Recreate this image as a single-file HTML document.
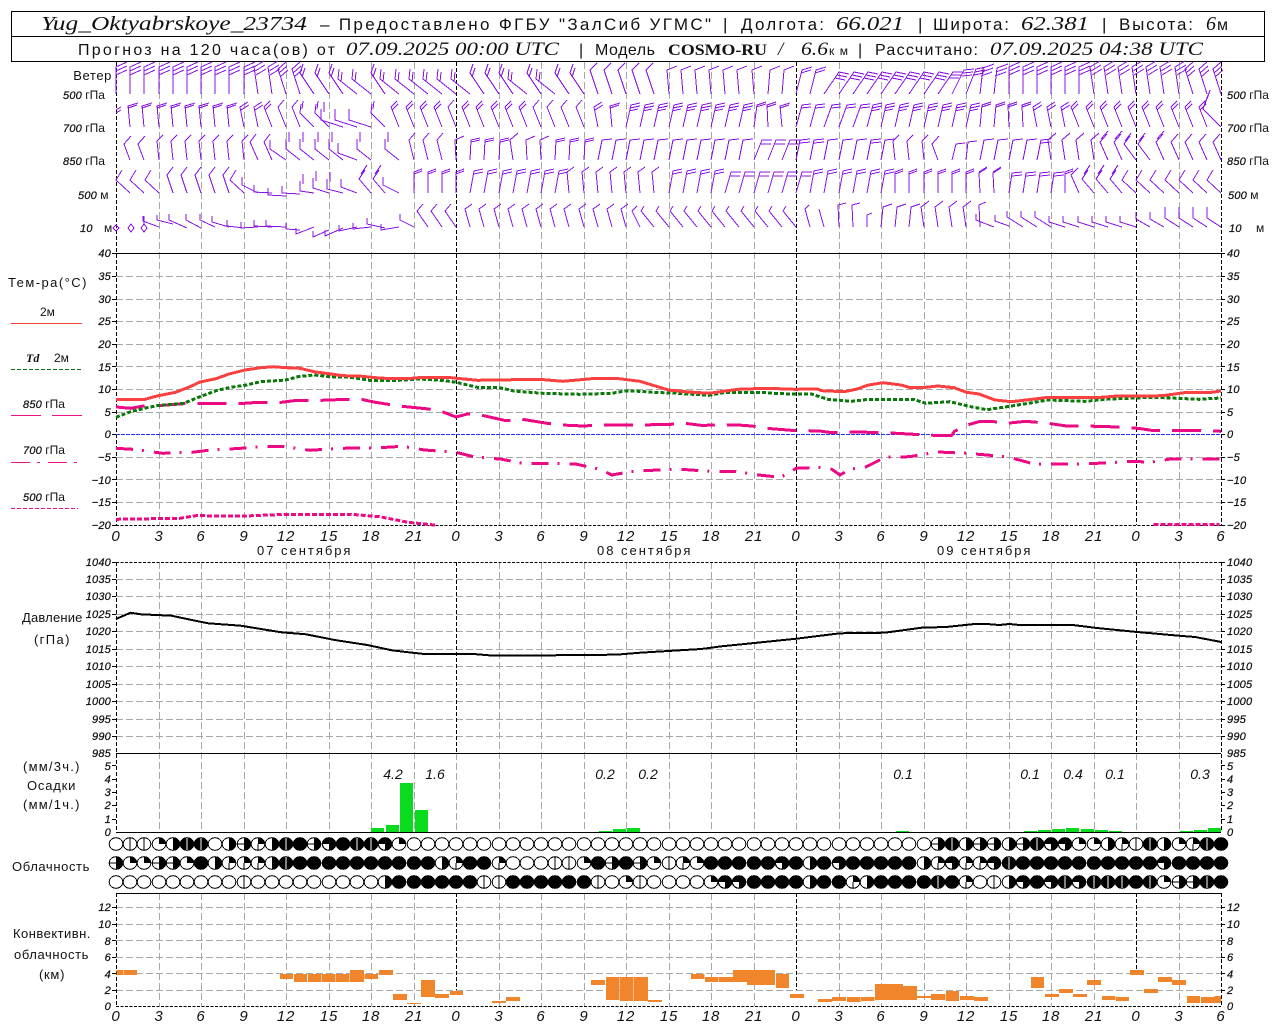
<!DOCTYPE html>
<html lang="ru"><head><meta charset="utf-8"><title>Yug_Oktyabrskoye_23734</title>
<style>
html,body{margin:0;padding:0;background:#fff}
svg{display:block}
text{font-family:"Liberation Sans","DejaVu Sans",sans-serif;fill:#111}
.i{font-style:italic;font-family:"Liberation Serif","Liberation Sans",serif}
.n{font-style:italic;font-size:11px;letter-spacing:.2px;stroke:#111;stroke-width:.25px}
.l{text-anchor:end}
.h{font-style:italic;font-size:15px;letter-spacing:.8px;text-anchor:middle}
.s{font-size:12px}
.m{font-size:13px;letter-spacing:.6px}
.t{font-size:17px}
.u{font-size:16px}
.ti{font-size:20px}
.ui{font-size:19px}
.bar{fill:#f0852c;shape-rendering:crispEdges}
</style></head><body>
<svg xmlns="http://www.w3.org/2000/svg" width="1280" height="1024" viewBox="0 0 1280 1024">
<defs>
<g id="o"><ellipse rx="6.8" ry="6.3" fill="#fff" stroke="#000"/></g>
<g id="v"><ellipse rx="6.8" ry="6.3" fill="#fff" stroke="#000"/><path d="M0-6V6" stroke="#000" fill="none"/></g>
<g id="q"><ellipse rx="6.8" ry="6.3" fill="#fff" stroke="#000"/><path d="M0 0V-6.3A6.8 6.3 0 0 1 6.8 0Z" fill="#000"/></g>
<g id="h"><ellipse rx="6.8" ry="6.3" fill="#fff" stroke="#000"/><path d="M0-6.3A6.8 6.3 0 0 1 0 6.3Z" fill="#000"/></g>
<g id="r"><ellipse rx="6.8" ry="6.3" fill="#fff" stroke="#000"/><path d="M0 0V-6.3A6.8 6.3 0 0 1 6.8 0Z" fill="#000"/><path d="M0 0V6" stroke="#000"/></g>
<g id="f"><ellipse rx="6.8" ry="6.3" fill="#fff" stroke="#000"/><path d="M0-6.3A6.8 6.3 0 0 1 0 6.3Z" fill="#000"/><path d="M-6.5 0H0" stroke="#000"/></g>
<g id="s"><ellipse rx="6.8" ry="6.3" fill="#000" stroke="#000"/><path d="M0 0V5.6A6 5.6 0 0 1-6 0Z" fill="#fff"/></g>
<g id="t"><ellipse rx="6.8" ry="6.3" fill="#000" stroke="#000"/><path d="M0-6V6" stroke="#fff"/></g>
<g id="d"><ellipse rx="6.8" ry="6.3" fill="#000" stroke="#000"/></g>
</defs>
<rect width="1280" height="1024" fill="#fff"/>

<!-- header boxes -->
<rect x="11.5" y="11.5" width="1253" height="25" fill="none" stroke="#000" shape-rendering="crispEdges"/>
<rect x="11.5" y="36.5" width="1253" height="25" fill="none" stroke="#000" shape-rendering="crispEdges"/>
<text class="i ti" x="41" y="30" textLength="266" lengthAdjust="spacingAndGlyphs">Yug_Oktyabrskoye_23734</text>
<text class="t" x="320" y="30" textLength="391" lengthAdjust="spacing">– Предоставлено ФГБУ "ЗалСиб УГМС"</text>
<text class="t" x="723" y="30">|</text>
<text class="t" x="741" y="30" textLength="83" lengthAdjust="spacing">Долгота:</text>
<text class="i ti" x="836" y="30" textLength="68" lengthAdjust="spacingAndGlyphs">66.021</text>
<text class="t" x="918" y="30">|</text>
<text class="t" x="933" y="30" textLength="76" lengthAdjust="spacing">Широта:</text>
<text class="i ti" x="1021" y="30" textLength="68" lengthAdjust="spacingAndGlyphs">62.381</text>
<text class="t" x="1102" y="30">|</text>
<text class="t" x="1119" y="30" textLength="74" lengthAdjust="spacing">Высота:</text>
<text class="i ti" x="1206" y="30">6</text><text class="u" x="1217" y="30">м</text>

<text class="u" x="78" y="55" textLength="257" lengthAdjust="spacing">Прогноз на 120 часа(ов) от</text>
<text class="i ui" x="346" y="55" textLength="213" lengthAdjust="spacingAndGlyphs">07.09.2025 00:00 UTC</text>
<text class="u" x="579" y="55">|</text>
<text class="u" x="595" y="55" textLength="60" lengthAdjust="spacing">Модель</text>
<text class="u" x="668" y="55" textLength="99" lengthAdjust="spacingAndGlyphs" style="font-family:'Liberation Serif',serif;font-weight:bold">COSMO-RU</text>
<text class="i ui" x="778" y="55">/</text>
<text class="i ui" x="801" y="55" textLength="27" lengthAdjust="spacingAndGlyphs">6.6</text>
<text class="s" x="829" y="55" textLength="19" lengthAdjust="spacing">км</text>
<text class="u" x="858" y="55">|</text>
<text class="u" x="875" y="55" textLength="103" lengthAdjust="spacing">Рассчитано:</text>
<text class="i ui" x="990" y="55" textLength="213" lengthAdjust="spacingAndGlyphs">07.09.2025 04:38 UTC</text>

<!-- gray grid -->
<g fill="none" stroke="#a8a8a8" stroke-dasharray="7 3" shape-rendering="crispEdges">
<path d="M116 276.5H1221M116 299.5H1221M116 321.5H1221M116 344.5H1221M116 366.5H1221M116 389.5H1221M116 412.5H1221M116 457.5H1221M116 479.5H1221M116 502.5H1221"/>
<path d="M116 579.5H1221M116 596.5H1221M116 614.5H1221M116 631.5H1221M116 649.5H1221M116 666.5H1221M116 684.5H1221M116 701.5H1221M116 719.5H1221M116 736.5H1221"/>
<path d="M116 907.5H1221M116 924.5H1221M116 940.5H1221M116 957.5H1221M116 973.5H1221M116 990.5H1221"/>
<path d="M159.5 62V525M201.5 62V525M244.5 62V525M286.5 62V525M329.5 62V525M371.5 62V525M414.5 62V525M499.5 62V525M541.5 62V525M584.5 62V525M626.5 62V525M669.5 62V525M711.5 62V525M754.5 62V525M839.5 62V525M881.5 62V525M924.5 62V525M966.5 62V525M1009.5 62V525M1051.5 62V525M1094.5 62V525M1179.5 62V525"/>
<path d="M159.5 562V832M201.5 562V832M244.5 562V832M286.5 562V832M329.5 562V832M371.5 562V832M414.5 562V832M499.5 562V832M541.5 562V832M584.5 562V832M626.5 562V832M669.5 562V832M711.5 562V832M754.5 562V832M839.5 562V832M881.5 562V832M924.5 562V832M966.5 562V832M1009.5 562V832M1051.5 562V832M1094.5 562V832M1179.5 562V832"/>
<path d="M159.5 893V1006M201.5 893V1006M244.5 893V1006M286.5 893V1006M329.5 893V1006M371.5 893V1006M414.5 893V1006M499.5 893V1006M541.5 893V1006M584.5 893V1006M626.5 893V1006M669.5 893V1006M711.5 893V1006M754.5 893V1006M839.5 893V1006M881.5 893V1006M924.5 893V1006M966.5 893V1006M1009.5 893V1006M1051.5 893V1006M1094.5 893V1006M1179.5 893V1006"/>
<path d="M456.5 753V832M796.5 753V832M1136.5 753V832"/>
</g>
<!-- black axes -->
<g fill="none" stroke="#000" shape-rendering="crispEdges">
<path stroke-dasharray="4 2" d="M116.5 62V525M1221.5 62V525M456.5 62V525M796.5 62V525M1136.5 62V525M116.5 562V832M1221.5 562V832M456.5 562V753M796.5 562V753M1136.5 562V753M116.5 893V1006M1221.5 893V1006M456.5 893V990M796.5 893V990M1136.5 893V975"/>
<path d="M116 253.5H1221M116 753.5H1221M116 832.5H1221M116 893.5H1221"/>
<path stroke-dasharray="3 1.5" d="M116 525.5H1221M116 562.5H1221M116 1006.5H1221"/>
<path d="M112 253.5h4M112 276.5h4M112 299.5h4M112 321.5h4M112 344.5h4M112 366.5h4M112 389.5h4M112 412.5h4M112 434.5h4M112 457.5h4M112 479.5h4M112 502.5h4M112 525.5h4M1221 253.5h4M1221 276.5h4M1221 299.5h4M1221 321.5h4M1221 344.5h4M1221 366.5h4M1221 389.5h4M1221 412.5h4M1221 434.5h4M1221 457.5h4M1221 479.5h4M1221 502.5h4M1221 525.5h4"/>
<path d="M112 562.5h4M112 579.5h4M112 596.5h4M112 614.5h4M112 631.5h4M112 649.5h4M112 666.5h4M112 684.5h4M112 701.5h4M112 719.5h4M112 736.5h4M1221 562.5h4M1221 579.5h4M1221 596.5h4M1221 614.5h4M1221 631.5h4M1221 649.5h4M1221 666.5h4M1221 684.5h4M1221 701.5h4M1221 719.5h4M1221 736.5h4"/>
<path d="M112 765.5h4M112 779.5h4M112 792.5h4M112 805.5h4M112 819.5h4M1221 765.5h4M1221 779.5h4M1221 792.5h4M1221 805.5h4M1221 819.5h4"/>
<path d="M112 907.5h4M112 924.5h4M112 940.5h4M112 957.5h4M112 973.5h4M112 990.5h4M1221 907.5h4M1221 924.5h4M1221 940.5h4M1221 957.5h4M1221 973.5h4M1221 990.5h4"/>
</g>

<!-- wind barbs -->
<g fill="none" stroke="#8a14e6" shape-rendering="crispEdges">
<path d="M116 94v-27l11-5m-11 9 11-5m-11 9 11-5M130 94v-27l11-5m-11 9 11-5m-11 9 11-5M144 94v-27l11-5m-11 9 11-5m-11 9 11-5M159 94v-27l11-5m-11 9 11-5m-11 9 11-5M173 94v-27l11-5m-11 9 11-5m-11 9 11-5M187 94v-27l11-5m-11 9 11-5m-11 9 11-5M201 94v-27l11-5m-11 9 11-5m-11 9 11-5M215 94v-27l11-5m-11 9 11-5m-11 9 11-5M229 94v-27l11-5m-11 9 11-5m-11 9 11-5M244 94v-27l11-5m-11 9 11-5m-11 9 11-5M258 94l-4-27 10-6m-9 10 10-6m-9 10 10-6M272 94l-4-27 10-6m-9 10 10-6m-9 10 10-6M286 94l-8-25 8-7m-7 11 8-7m-7 11 8-7M300 94l-8-25 8-7m-7 11 8-7m-7 11 8-7M314 94l-14-21 3-9m-1 13 3-9M329 94l-14-21 3-9m-1 13 3-9M343 94l-14-21 3-9m-1 13 3-9M357 94l-19-15 1-10m2 13 1-10M371 94l-19-15 1-10m2 13 1-10M385 94l-14-21 3-9m-1 13 3-9M399 94l-19-15 1-10m2 13 1-10M414 94l-19-15 1-10m2 13 1-10M428 94l-19-15 1-10m2 13 1-10M442 94l-19-15 1-10m2 13 1-10M456 94l-19-15 1-10m2 13 1-10M470 94l-19-15 1-10m2 13 1-10M484 94l-14-21 3-9m-1 13 3-9M499 94l-14-21 3-9m-1 13 3-9M513 94l-14-21 3-9m-1 13 3-9M527 94l-19-15 1-10m2 13 1-10M541 94l-14-21 3-9m-1 13 3-9M555 94l-19-15 1-10m2 13 1-10M569 94l-14-21 3-9m-1 13 3-9M584 94l-14-21 3-9m-1 13 3-9M598 94l-8-24 7-7M612 94l-8-24 7-7M626 94l-8-24 7-7M640 94l-8-24 7-7M654 94l-8-24 7-7M669 94l-2-24 10-4M683 94l-2-24 10-4M697 94l-2-24 10-4M711 94l-2-24 10-4M725 94l-2-24 10-4M739 94l-2-24 10-4M754 94l-2-24 10-4M768 94l2-24 10-4M782 94l2-24 10-4M796 94l6-24 10-3m-11 6 10-3M810 94l6-24 10-3m-11 6 10-3M824 94l15-22 10 2m-12 1 10 2m-12 1 10 2M839 94l15-22 10 2m-12 1 10 2m-12 1 10 2M853 94l15-22 10 2m-12 1 10 2m-12 1 10 2M867 94l15-22 10 2m-12 1 10 2m-12 1 10 2M881 94l15-22 10 2m-12 1 10 2m-12 1 10 2M895 94l15-22 10 2m-12 1 10 2m-12 1 10 2M909 94l15-22 10 2m-12 1 10 2m-12 1 10 2M924 94l15-22 10 2m-12 1 10 2m-12 1 10 2M938 94l15-22 10 0m-12 3 10 0m-12 3 10 0M952 94l12-24 10-1m-11 4 10-1m-11 4 10-1M966 94l10-25 10-2m-11 5 10-2m-11 5 10-2M980 94l3-26 11-4m-12 8 11-4m-12 8 11-4M994 94l3-26 11-4m-12 8 11-4m-12 8 11-4M1009 94v-27l11-5m-11 9 11-5m-11 9 11-5M1023 94v-27l11-5m-11 9 11-5m-11 9 11-5M1037 94v-27l11-5m-11 9 11-5m-11 9 11-5M1051 94v-27l11-5m-11 9 11-5m-11 9 11-5M1065 94v-27l11-5m-11 9 11-5m-11 9 11-5M1079 94v-27l11-5m-11 9 11-5m-11 9 11-5M1094 94l-4-27 10-6m-9 10 10-6m-9 10 10-6M1108 94l-4-27 10-6m-9 10 10-6m-9 10 10-6M1122 94l-4-27 10-6m-9 10 10-6m-9 10 10-6M1136 94l-4-27 10-6m-9 10 10-6m-9 10 10-6M1150 94l-4-27 10-6m-9 10 10-6m-9 10 10-6M1164 94l-4-27 10-6m-9 10 10-6m-9 10 10-6M1179 94l-4-27 10-6m-9 10 10-6m-9 10 10-6M1193 94l-8-25 8-7m-7 11 8-7m-7 11 8-7M1207 94l-8-25 8-7m-7 11 8-7m-7 11 8-7M1221 94l-8-25 8-7m-7 11 8-7m-7 11 8-7"/>
<path d="M116 110l5-3m-5 6 5-3M130 127l-2-21 10-3m-10 5 9-3M144 127l-2-21 10-3m-10 5 9-3M159 127l-2-21 10-3m-10 5 9-3M173 127l-2-21 10-3m-10 5 9-3M187 127l-2-21 10-3m-10 5 9-3M201 127l-2-21 10-3m-10 5 9-3M215 127l-2-21 10-3m-10 5 9-3M229 127l-2-21 10-3m-10 5 9-3M244 127l-4-20 8-5m-7 8 8-5M258 127l-4-20 8-5m-7 8 8-5M272 127l-8-20 6-6m-5 9 6-6M286 127l-8-20 6-7M300 127l-8-20 6-7M314 127l-14-14 1-9m1 5 1-8M329 127l-14-14 1-9m1 5 1-8M343 127l-22-7 0-11m3 3 0-10M357 127l-22-7 0-11M371 127l-22-7 0-11M385 127l-14-14 1-9m1 5 1-8M399 127l-8-20 6-6m-5 9 6-6M414 127l-8-20 6-6m-5 9 6-6M428 127l-8-20 6-6m-5 9 6-6M442 127l-8-20 6-6m-5 9 6-6M456 127l-8-20 6-7M470 127l-8-20 6-6m-5 9 6-6M484 127l-8-20 6-6m-5 9 6-6M499 127l-8-20 6-6m-5 9 6-6M513 127l-8-20 6-6m-5 9 6-6M527 127l-8-20 6-6m-5 9 6-6M541 127l-8-20 6-7M555 127l-8-20 6-7M569 127l-8-20 6-7M584 127l-8-20 6-7M598 127l-4-20 8-5m-7 8 8-5M612 127l-2-21 10-3m-10 5 9-3M626 127l5-22 9-2m-10 5 10-2m-11 5 9-2M640 127l5-22 9-2m-10 5 10-2m-11 5 9-2M654 127l5-22 9-2m-10 5 10-2m-11 5 9-2M669 127l5-22 9-2m-10 5 10-2m-11 5 9-2M683 127l5-22 9-2m-10 5 10-2m-11 5 9-2M697 127l5-22 9-2m-10 5 10-2m-11 5 9-2M711 127l5-22 9-2m-10 5 10-2m-11 5 9-2M725 127l5-22 9-2m-10 5 10-2m-11 5 9-2M739 127l5-22 9-2m-10 5 10-2m-11 5 9-2M754 127l3-22 9-3m-10 5 10-3M768 127l-1-22 9-3m-9 5 9-3M782 127l-2-21 10-3m-10 5 9-3M796 127l6-22 9-1m-10 4 10-1M810 127l6-22 9-1m-10 4 10-1M824 127l8-22 9-1m-10 4 10-1M839 127l8-22 9-1m-10 4 10-1M853 127l8-22 9-1m-10 4 10-1M867 127l6-22 9-2m-10 5 10-2m-11 5 9-2M881 127l5-22 9-2m-10 5 10-2m-11 5 9-2M895 127l5-22 9-2m-10 5 10-2m-11 5 9-2M909 127l5-22 9-2m-10 5 10-2m-11 5 9-2M924 127l5-22 9-2m-10 5 10-2m-11 5 9-2M938 127l5-22 9-2m-10 5 10-2m-11 5 9-2M952 127l5-22 9-2m-10 5 10-2m-11 5 9-2M966 127l5-22 9-2m-10 5 10-2m-11 5 9-2M980 127l2-22 9-3m-9 5 9-3M994 127l2-22 9-3m-9 5 9-3M1009 127l-1-22 9-3m-9 5 9-3M1023 127l-1-22 9-3m-9 5 9-3M1037 127l-4-20 8-5m-7 8 8-5M1051 127l-4-20 8-5m-7 8 8-5M1065 127l-4-20 8-5m-7 8 8-5M1079 127l-8-20 6-6m-5 9 6-6M1094 127l-8-20 6-6m-5 9 6-6M1108 127l-8-20 6-6m-5 9 6-6M1122 127l-8-20 6-6m-5 9 6-6M1136 127l-8-20 6-6m-5 9 6-6M1150 127l-8-20 6-6m-5 9 6-6M1164 127l-8-20 6-6m-5 9 6-6M1179 127l-8-20 6-6m-5 9 6-6M1193 127l-8-20 6-6m-5 9 6-6M1207 127l-8-20 6-6m-5 9 6-6M1221 127l-18-18 3-9m-1 4 3-9m-1 4 3-9"/>
<path d="M130 160l-6-16 7-8M144 160l-6-16 7-8M159 160l-2-19 6-6M173 160l-2-19 6-6M187 160l-2-19 6-6M201 160l-2-19 6-6M215 160l-2-19 6-6M229 160l-2-19 6-6M244 160l-2-19 6-6M258 160l-8-18 6-8M272 160l-8-18 6-8M286 160l-16-11 0-9M300 160l-14-11 0-10m3 3 0-10M314 160l-14-11 0-10m3 3 0-10M329 160l-14-11 0-10m3 3 0-10M343 160l-14-11 0-10m3 3 0-10M357 160l-19-7 0-10M371 160l-14-11 0-10m3 3 0-10M399 160l-14-11 0-10m3 3 0-10M414 160l-5-20 6-7M428 160l-5-20 6-7M442 160l-5-20 6-7M456 160l-1-20 9-4M470 160l1-20 9-2m-9 4 9-2M484 160l1-20 9-2m-9 4 9-2M499 160l1-20 9-2m-9 4 9-2M513 160l-3-20 7-6m-6 5 7-6M527 160l-1-20 9-4M541 160l-1-20 9-4M555 160l1-20 9-2m-9 4 9-2M569 160l1-20 9-2m-9 4 9-2M584 160l1-20 9-2m-9 4 9-2M598 160l4-20 10-1M612 160l4-20 10-1M626 160l4-20 10-1M640 160l4-20 10-1M654 160l4-20 10-1M669 160l4-20 10-1M683 160l4-20 10-1M697 160l4-20 10-1M711 160l4-20 10-1M725 160l4-20 10-1M739 160l4-20 10-1M754 160l8-20 10 0m-11 4 10 0M768 160l8-20 10 0m-11 4 10 0M782 160l8-20 10 0m-11 4 10 0M796 160l4-20 10-1m-10 4 10-1M810 160l4-20 10-1m-10 4 10-1M824 160l4-20 10-1M839 160l4-20 10-1M853 160l4-20 10-1M867 160l4-20 10-1m-10 4 10-1M881 160l4-20 10-1M895 160l-2-19 6-6M909 160l-2-19 6-6M924 160l-2-19 6-6M938 160l-6-16 7-8M952 160l4-16 9-1M966 160l2-18 9-1M980 160l4-20 10-1M994 160l4-20 10-1M1009 160l4-20 10-1M1023 160l4-20 10-1M1037 160l4-20 10-1m-10 4 10-1M1051 160l-3-20 7-6m-6 5 7-6M1065 160l-3-20 7-6m-6 5 7-6M1079 160l-3-20 7-6m-6 5 7-6M1094 160l-3-20 7-6m-6 5 7-6M1108 160l-8-18 7-8m-6 5 7-8M1122 160l-8-18 7-8m-6 5 7-8M1136 160l-12-16 6-8m-5 5 6-8M1150 160l-12-16 6-8m-5 5 6-8M1164 160l-8-18 7-8m-6 5 7-8M1179 160l-8-18 7-8M1193 160l-8-18 7-8M1207 160l-8-18 7-8M1221 160l-8-18 7-8"/>
<path d="M130 193l-14-13 6-10M144 193l-14-13 6-10M159 193l-14-13 6-10M173 193l-6-18 6-8M187 193l-6-18 6-8M201 193l-6-18 6-8M215 193l-6-18 6-8M229 193l-6-18 6-8M244 193l-14-13 6-10M258 193l-16-8 0-8M272 193l-18-1 0-7M286 196l-18-1 0-7M300 194l-18-1 0-7M314 193l-14-2 0-10m3 3 0-10M329 193l-16-5 0-10m3 3 0-10M343 193l-16-4 0-10m3 3 0-10M357 193l-16-6 0-8M371 193l-12-14 6-9m-4 4 6-9M385 193l-12-14 6-9m-4 4 6-9M399 193l-16-8 0-8M414 193v-21l8-3m-8 5 8-3M428 193v-21l8-3m-8 5 8-3M442 193v-21l8-3m-8 5 8-3M456 193v-21l8-3m-8 5 8-3M470 193l4-22 9-2m-9 5 9-2M484 193l4-22 9-2m-9 5 9-2M499 193l4-22 9-2m-9 5 9-2M513 193l4-22 9-2m-9 5 9-2M527 193l4-22 9-2m-9 5 9-2M541 193l4-22 9-2m-9 5 9-2M555 193l4-22 9-2m-9 5 9-2M569 193l-2-21 7-5M584 193l-2-21 7-5M598 193l-2-21 7-5M612 193l-2-21 7-5M626 193l-2-21 7-5M640 193l-2-21 7-5M654 193l-2-21 7-5M669 193l4-22 9-2m-9 5 9-2M683 193l4-22 9-2m-9 5 9-2M697 193l4-22 9-2m-9 5 9-2M711 193l4-22 9-2m-9 5 9-2M725 193l6-21 10 0m-11 4 10 0M739 193l6-21 10 0m-11 4 10 0M754 193l6-21 10 0m-11 4 10 0M768 193l6-21 10 0m-11 4 10 0M782 193l6-21 10 0m-11 4 10 0M796 193l6-21 10 0m-11 4 10 0M810 193l4-22 9-2m-9 5 9-2M824 193l4-22 9-2m-9 5 9-2M839 193l4-22 9-2m-9 5 9-2M853 193l4-22 9-2m-9 5 9-2M867 193l4-22 9-2m-9 5 9-2M881 193l4-22 9-2m-9 5 9-2M895 193v-21l8-3m-8 5 8-3M909 193v-21l8-3m-8 5 8-3M924 193v-21l8-3m-8 5 8-3M938 193v-21l8-3m-8 5 8-3M952 193v-21l8-3m-8 5 8-3M966 193v-21l8-3m-8 5 8-3M980 193l-1-20 8-5m-8 4 8-5M994 193l-1-20 8-5m-8 4 8-5M1009 193l3-20 10-1m-10 4 10-1M1023 193l3-20 10-1m-10 4 10-1M1037 193l3-20 10-1m-10 4 10-1M1051 193l3-20 10-1m-10 4 10-1M1065 193v-21l8-3m-8 5 8-3M1079 193l-8-18 7-7M1094 193l-12-14 6-9m-4 4 6-9M1108 193l-12-14 6-9m-4 4 6-9M1122 193l-12-14 6-9m-4 4 6-9M1136 193l-14-13 6-10M1150 193l-14-13 6-10M1164 193l-14-13 6-10M1179 193l-14-13 6-10M1193 193l-14-13 6-10M1207 193l-14-13 6-10M1221 193l-14-13 6-10"/>
<path d="M113 228l3-3 3 3-3 3zM128 228l3-4 3 4-3 4zM141 228l3-4 3 4-3 4zM144 224v-8M159 227l-16-6 0-5M173 224l-16-4 0-5M187 228l-18-8 0-6M201 228l-15-8 0-6M215 227l-15-7 0-6M229 227l-17-5 0-6M244 228l-17-2 0-6M258 227l-17 1 0-6M272 227l-18-1 0-6M286 227l-20-1 0-6M300 230l-14-1 0-6M314 227l-18 7 0-6M329 230l-16 7 0-6M343 228l-18 8 0-6M357 227l-18 4 0-6M371 227l-18 2 0-6M385 228l-18-4 0-6M399 227l-18 3 0-6M414 227l-14-7 0-6M428 227l-11-16 6-7M442 227l-11-16 6-7M456 227l-11-16 6-7M470 227l-5-18 7-5M484 227l-5-18 7-5M499 227l-5-18 7-5M513 227l-5-18 7-5M527 227l-5-18 7-5M541 227l-5-18 7-5M555 227l-5-18 7-5M569 227l-5-18 7-5M584 227l-5-18 7-5M598 227l-5-18 7-5M612 227l-5-18 7-5M626 227l-5-18 7-5M640 227l-8-16 5-5M654 227l-13-16 3-5M669 227l-13-16 3-5M683 227l-13-16 3-5M697 227l-13-16 3-5M711 227l-13-16 3-5M725 227l-13-16 3-5M739 227l-13-16 3-5M754 227l-13-16 3-5M768 227l-13-16 3-5M782 227l-13-16 3-5M796 227l-13-16 3-5M810 227l-5-18 4-4M824 227l-5-18M839 227l-1-22 8-2M853 227l-1-22 8-2M867 227v-12l5-2M881 227l2-20 9-3M895 227l2-20 9-3M909 227l2-20 9-3M924 227l-3-20 8-6M938 227l-3-20 8-6M952 227l-3-20 8-6M966 227l-3-20 8-6M980 227l-1-22 7-3M994 227l-18-7 0-6M1009 226l-14-5 0-6M1023 227l-16-10 0-6M1037 227l-16-10 0-6M1051 227l-16-10 0-6M1065 227l-16-5 0-6M1079 227l-16-5 0-6M1094 227l-16-5 0-6M1108 227l-16-5 0-6M1122 227l-16-5 0-6M1136 227l-16-5 0-6M1150 227l-14-8 0-7M1164 227l-14-8 0-7M1179 227l-14-9 0-11M1193 227l-14-9 0-11M1207 227l-14-9 0-11M1221 227l-14-9 0-11"/>
</g>

<!-- wind labels -->
<text class="m" x="112" y="80" text-anchor="end">Ветер</text>
<g class="s">
<text x="63" y="99"><tspan class="n">500</tspan> гПа</text><text x="63" y="132"><tspan class="n">700</tspan> гПа</text><text x="63" y="165"><tspan class="n">850</tspan> гПа</text><text x="78" y="199"><tspan class="n">500</tspan> м</text><text x="80" y="232"><tspan class="n">10</tspan></text><text x="104" y="232">м</text>
<text x="1227" y="99"><tspan class="n">500</tspan> гПа</text><text x="1227" y="132"><tspan class="n">700</tspan> гПа</text><text x="1227" y="165"><tspan class="n">850</tspan> гПа</text><text x="1228" y="199"><tspan class="n">500</tspan> м</text><text x="1229" y="232"><tspan class="n">10</tspan></text><text x="1256" y="232">м</text>
</g>

<!-- axis numbers -->
<g class="n">
<text class="l" x="111" y="257">40</text><text class="l" x="111" y="280">35</text><text class="l" x="111" y="303">30</text><text class="l" x="111" y="325">25</text><text class="l" x="111" y="348">20</text><text class="l" x="111" y="371">15</text><text class="l" x="111" y="393">10</text><text class="l" x="111" y="416">5</text><text class="l" x="111" y="438">0</text><text class="l" x="111" y="461">−5</text><text class="l" x="111" y="484">−10</text><text class="l" x="111" y="506">−15</text><text class="l" x="111" y="529">−20</text>
<text x="1227" y="257">40</text><text x="1227" y="280">35</text><text x="1227" y="303">30</text><text x="1227" y="325">25</text><text x="1227" y="348">20</text><text x="1227" y="371">15</text><text x="1227" y="393">10</text><text x="1227" y="416">5</text><text x="1227" y="438">0</text><text x="1227" y="461">−5</text><text x="1227" y="484">−10</text><text x="1227" y="506">−15</text><text x="1227" y="529">−20</text>
<text class="l" x="111" y="566">1040</text><text class="l" x="111" y="583">1035</text><text class="l" x="111" y="600">1030</text><text class="l" x="111" y="618">1025</text><text class="l" x="111" y="635">1020</text><text class="l" x="111" y="653">1015</text><text class="l" x="111" y="670">1010</text><text class="l" x="111" y="688">1005</text><text class="l" x="111" y="705">1000</text><text class="l" x="111" y="723">995</text><text class="l" x="111" y="740">990</text><text class="l" x="111" y="757">985</text>
<text x="1227" y="566">1040</text><text x="1227" y="583">1035</text><text x="1227" y="600">1030</text><text x="1227" y="618">1025</text><text x="1227" y="635">1020</text><text x="1227" y="653">1015</text><text x="1227" y="670">1010</text><text x="1227" y="688">1005</text><text x="1227" y="705">1000</text><text x="1227" y="723">995</text><text x="1227" y="740">990</text><text x="1227" y="757">985</text>
<text class="l" x="111" y="770">5</text><text class="l" x="111" y="783">4</text><text class="l" x="111" y="796">3</text><text class="l" x="111" y="809">2</text><text class="l" x="111" y="823">1</text><text class="l" x="111" y="836">0</text>
<text x="1227" y="770">5</text><text x="1227" y="783">4</text><text x="1227" y="796">3</text><text x="1227" y="809">2</text><text x="1227" y="823">1</text><text x="1227" y="836">0</text>
<text class="l" x="111" y="911">12</text><text class="l" x="111" y="928">10</text><text class="l" x="111" y="945">8</text><text class="l" x="111" y="961">6</text><text class="l" x="111" y="978">4</text><text class="l" x="111" y="994">2</text><text class="l" x="111" y="1010">0</text>
<text x="1227" y="911">12</text><text x="1227" y="928">10</text><text x="1227" y="945">8</text><text x="1227" y="961">6</text><text x="1227" y="978">4</text><text x="1227" y="994">2</text><text x="1227" y="1010">0</text>
</g>

<!-- hour labels -->
<g class="h">
<text x="116" y="541">0</text><text x="159" y="541">3</text><text x="201" y="541">6</text><text x="244" y="541">9</text><text x="286" y="541">12</text><text x="329" y="541">15</text><text x="371" y="541">18</text><text x="414" y="541">21</text><text x="456" y="541">0</text><text x="499" y="541">3</text><text x="541" y="541">6</text><text x="584" y="541">9</text><text x="626" y="541">12</text><text x="669" y="541">15</text><text x="711" y="541">18</text><text x="754" y="541">21</text><text x="796" y="541">0</text><text x="839" y="541">3</text><text x="881" y="541">6</text><text x="924" y="541">9</text><text x="966" y="541">12</text><text x="1009" y="541">15</text><text x="1051" y="541">18</text><text x="1094" y="541">21</text><text x="1136" y="541">0</text><text x="1179" y="541">3</text><text x="1221" y="541">6</text>
</g>
<g class="h">
<text x="116" y="1021">0</text><text x="159" y="1021">3</text><text x="201" y="1021">6</text><text x="244" y="1021">9</text><text x="286" y="1021">12</text><text x="329" y="1021">15</text><text x="371" y="1021">18</text><text x="414" y="1021">21</text><text x="456" y="1021">0</text><text x="499" y="1021">3</text><text x="541" y="1021">6</text><text x="584" y="1021">9</text><text x="626" y="1021">12</text><text x="669" y="1021">15</text><text x="711" y="1021">18</text><text x="754" y="1021">21</text><text x="796" y="1021">0</text><text x="839" y="1021">3</text><text x="881" y="1021">6</text><text x="924" y="1021">9</text><text x="966" y="1021">12</text><text x="1009" y="1021">15</text><text x="1051" y="1021">18</text><text x="1094" y="1021">21</text><text x="1136" y="1021">0</text><text x="1179" y="1021">3</text><text x="1221" y="1021">6</text>
</g>
<g class="m">
<text x="257" y="555" textLength="94" lengthAdjust="spacing">07 сентября</text>
<text x="597" y="555" textLength="94" lengthAdjust="spacing">08 сентября</text>
<text x="937" y="555" textLength="94" lengthAdjust="spacing">09 сентября</text>
</g>

<!-- left captions -->
<g class="m">
<text x="8" y="287" textLength="79" lengthAdjust="spacing">Тем-ра(°C)</text>
<text x="22" y="622" textLength="61" lengthAdjust="spacing">Давление</text>
<text x="34" y="644" textLength="36" lengthAdjust="spacing">(гПа)</text>
<text x="23" y="771" textLength="57" lengthAdjust="spacing">(мм/3ч.)</text>
<text x="27" y="790" textLength="49" lengthAdjust="spacing">Осадки</text>
<text x="23" y="809" textLength="57" lengthAdjust="spacing">(мм/1ч.)</text>
<text x="12" y="871" textLength="78" lengthAdjust="spacing">Облачность</text>
<text x="13" y="938" textLength="78" lengthAdjust="spacing">Конвективн.</text>
<text x="14" y="959" textLength="75" lengthAdjust="spacing">облачность</text>
<text x="39" y="979" textLength="26" lengthAdjust="spacing">(км)</text>
</g>
<g class="s">
<text x="40" y="316">2м</text>
<text x="26" y="362"><tspan class="i" style="font-weight:bold">Td</tspan><tspan x="54">2м</tspan></text>
<text x="23" y="408"><tspan class="n">850</tspan> гПа</text>
<text x="23" y="454"><tspan class="n">700</tspan> гПа</text>
<text x="23" y="501"><tspan class="n">500</tspan> гПа</text>
</g>
<g fill="none" shape-rendering="crispEdges">
<path d="M11 323.5H82" stroke="#f04040"/>
<path d="M11 369.5H82" stroke="#107010" stroke-dasharray="4 2"/>
<path d="M11 415.5H41M52 415.5H82" stroke="#f0108a"/>
<path d="M11 462.5H30M37 462.5h3M48 462.5H67M74 462.5h3" stroke="#f0108a"/>
<path d="M11 508.5H78" stroke="#f0108a" stroke-dasharray="4 2"/>
</g>

<!-- zero line -->
<path d="M116 434.5H1221" stroke="#2030ff" fill="none" stroke-dasharray="4 1" shape-rendering="crispEdges"/>

<!-- curves -->
<g fill="none" stroke-linejoin="round" shape-rendering="crispEdges">
<polyline stroke="#ec0a84" stroke-width="3" stroke-dasharray="5 2" points="116,519.3 134.7,519 179.6,518.3 196,515.7 245,516 285.7,514.3 351,514.3 379.6,516.7 408,522.3 437,525.3"/>
<polyline stroke="#ec0a84" stroke-width="3" stroke-dasharray="5 2" points="1153.5,524.3 1219.6,524.3"/>
<polyline stroke="#ec0a84" stroke-width="3" stroke-dasharray="17 9 2 10" points="116,448.3 132.6,449.3 163,453.3 192,452.3 208,450.3 240.8,448.3 265,446.3 281.6,446.3 310,450.3 339,448.3 375.5,448 402,446.3 424.5,450 456,452.3 473.5,456.7 502,459.3 522.4,463.3 538.8,463.3 575.5,464 600,469.3 612,475 628.6,472 640,470.7 680.8,469.3 709.4,471.3 734,471.3 758.4,475 780.8,477.3 796.3,468.3 819.6,467.3 831.8,469.3 840,475 850,469.3 866.5,466.7 885,457.3 909.4,456.7 938,452 966.5,453.3 1007,456.7 1034,464 1076.7,464 1097,463.3 1134,461.3 1150,462.3 1170.6,459 1221,459"/>
<polyline stroke="#ec0a84" stroke-width="3" stroke-dasharray="29 12" points="116,407 130.6,408.3 145,405.7 163,405.3 183.7,403.7 200,403.3 224.5,403.3 238.8,403.7 253,402.7 265,402.3 281.6,402.3 294,400.7 306,400.3 322,400.3 347,399.3 363,399.7 375.5,402.3 388,404.3 402,406.3 428.6,409 443,412 456,417 467.3,414 482,415.3 506,420.7 522.4,419.3 547,423.3 561,425 583.7,426 600,425 630.6,425 640,425 670.6,424.3 685,423.3 701,425.3 738,425 752,426 766.5,428.3 791,430.3 819.6,431 832,432.7 860,432 897,433.3 913.5,434.3 934,435.3 952,435.3 954,431.7 964.5,425.7 979,421.7 991,421.3 1007,423.3 1025.7,421.3 1048,423.3 1066.5,426 1085,426 1109.4,426.7 1138,428.3 1154,430.7 1195,430.3 1221,431.3"/>
<polyline stroke="#0a780a" stroke-width="3" stroke-dasharray="4 2" points="116,417.3 130.6,411.7 147,407.7 157,405.7 183.7,403.3 200,396.7 216,390.7 230.6,387.3 245,385.3 261,381.7 286,380 298,376.7 314,375 331,376.7 351,377.3 371.4,380.7 392,380.7 420,379 445,380.7 456,382.3 477.5,387.3 498,387.3 514,391 543,393.3 580,394.3 612,393.3 624.5,391 640,391.3 652,392.3 677,393.3 709,395.3 725.7,392.3 762.4,392.3 779,393.7 811.4,394 827.8,399.3 852,401.3 868.6,399.3 913.5,399.3 925.7,403.3 950,401.7 970.6,406.7 987,409.7 1007,406.7 1032,402.7 1048,400 1085,401.3 1109.4,399 1154,397.3 1199,399.3 1221,398"/>
<polyline stroke="#fa4040" stroke-width="3" points="116,399.3 145,399.3 157,396 175.5,392.3 190,386.7 200,382 216,378.7 229,374 245,370 261,367.7 273.5,366.7 286,367.7 300,368.3 314,371.7 331,374 343,375.7 359,376 375.5,377.7 392,378.7 408,378.7 422.5,377.3 447,377.3 457,378.3 477.5,380.3 539,379.3 563,381.3 596,378.3 616,378.3 640,381.3 652,385 668.6,390 685,391.7 709,393.3 738,389.3 766.5,388.3 795,389.3 817.5,389 821.6,390.7 844,391.7 856,389.3 868.6,385 883,382.7 901,385 909,387.3 925.7,387.3 938,386 954,387.7 966.5,392.3 979,394 995,400 1011.4,401.7 1032,399.3 1048,397.3 1101,397.3 1117.5,396 1142,396 1162.4,395.7 1187,392.3 1211.4,392.3 1221,391"/>
<polyline stroke="#000" stroke-width="2" points="116,619 130.6,612.7 140.8,614.3 171.4,615.7 191.8,620 208.2,623.3 240.8,625.7 265.3,629.7 281.6,632.3 306,634.3 334.7,640 367.3,645 391.8,650.3 412.2,652.7 424.5,654 473.5,654 493.9,655.7 542.9,655.7 563.3,655 616.3,654.7 640,652.7 701.2,649 721.6,646.3 754.3,643 796.3,638.7 840,633.3 884.9,632.7 921.6,627.7 946,627 974.7,624 987,624 999.2,625 1009.4,624 1019.6,625 1072.7,625 1097.1,628 1133.9,631.7 1178.8,635.7 1195.1,637 1221.2,642"/>
</g>

<!-- precipitation -->
<g fill="#08dc1c" shape-rendering="crispEdges">
<rect x="371" y="828" width="13" height="4"/><rect x="386" y="825" width="13" height="7"/><rect x="400" y="783" width="13" height="49"/><rect x="415" y="810" width="13" height="22"/>
<rect x="599" y="831" width="13" height="1"/><rect x="613" y="829" width="13" height="3"/><rect x="627" y="828" width="13" height="4"/>
<rect x="896" y="831" width="13" height="1"/>
<rect x="1024" y="831" width="13" height="1"/><rect x="1038" y="830" width="13" height="2"/><rect x="1052" y="829" width="13" height="3"/><rect x="1066" y="828" width="13" height="4"/><rect x="1081" y="829" width="13" height="3"/><rect x="1095" y="830" width="13" height="2"/><rect x="1109" y="831" width="13" height="1"/>
<rect x="1180" y="831" width="13" height="1"/><rect x="1194" y="830" width="13" height="2"/><rect x="1208" y="828" width="13" height="4"/>
</g>
<g font-size="14" style="font-style:italic" text-anchor="middle">
<text x="393" y="779">4.2</text><text x="435" y="779">1.6</text><text x="605" y="779">0.2</text><text x="648" y="779">0.2</text><text x="903" y="779">0.1</text><text x="1030" y="779">0.1</text><text x="1073" y="779">0.4</text><text x="1115" y="779">0.1</text><text x="1200" y="779">0.3</text>
</g>

<!-- cloud cover -->
<g shape-rendering="crispEdges">
<g transform="translate(0,844)">
<use href="#o" x="116"/><use href="#v" x="130"/><use href="#v" x="144"/><use href="#q" x="159"/><use href="#h" x="173"/><use href="#t" x="187"/><use href="#t" x="201"/><use href="#o" x="215"/><use href="#h" x="229"/><use href="#f" x="244"/><use href="#r" x="258"/><use href="#h" x="272"/><use href="#t" x="286"/><use href="#d" x="300"/><use href="#f" x="314"/><use href="#s" x="329"/><use href="#d" x="343"/><use href="#t" x="357"/><use href="#t" x="371"/><use href="#s" x="385"/><use href="#q" x="399"/><use href="#o" x="414"/><use href="#o" x="428"/><use href="#o" x="442"/><use href="#o" x="456"/><use href="#o" x="470"/><use href="#o" x="484"/><use href="#o" x="499"/><use href="#o" x="513"/><use href="#o" x="527"/><use href="#o" x="541"/><use href="#o" x="555"/><use href="#o" x="569"/><use href="#o" x="584"/><use href="#o" x="598"/><use href="#o" x="612"/><use href="#o" x="626"/><use href="#o" x="640"/><use href="#o" x="654"/><use href="#o" x="669"/><use href="#o" x="683"/><use href="#o" x="697"/><use href="#o" x="711"/><use href="#o" x="725"/><use href="#o" x="739"/><use href="#o" x="754"/><use href="#o" x="768"/><use href="#o" x="782"/><use href="#o" x="796"/><use href="#o" x="810"/><use href="#o" x="824"/><use href="#o" x="839"/><use href="#o" x="853"/><use href="#o" x="867"/><use href="#o" x="881"/><use href="#o" x="895"/><use href="#o" x="909"/><use href="#o" x="924"/><use href="#f" x="938"/><use href="#t" x="952"/><use href="#h" x="966"/><use href="#f" x="980"/><use href="#f" x="994"/><use href="#h" x="1009"/><use href="#f" x="1023"/><use href="#t" x="1037"/><use href="#s" x="1051"/><use href="#s" x="1065"/><use href="#q" x="1079"/><use href="#q" x="1094"/><use href="#h" x="1108"/><use href="#r" x="1122"/><use href="#v" x="1136"/><use href="#t" x="1150"/><use href="#h" x="1164"/><use href="#q" x="1179"/><use href="#r" x="1193"/><use href="#t" x="1207"/><use href="#d" x="1221"/>
</g>
<g transform="translate(0,863)">
<use href="#f" x="116"/><use href="#q" x="130"/><use href="#q" x="144"/><use href="#f" x="159"/><use href="#f" x="173"/><use href="#q" x="187"/><use href="#d" x="201"/><use href="#h" x="215"/><use href="#r" x="229"/><use href="#r" x="244"/><use href="#r" x="258"/><use href="#h" x="272"/><use href="#t" x="286"/><use href="#d" x="300"/><use href="#d" x="314"/><use href="#d" x="329"/><use href="#d" x="343"/><use href="#d" x="357"/><use href="#d" x="371"/><use href="#d" x="385"/><use href="#d" x="399"/><use href="#d" x="414"/><use href="#d" x="428"/><use href="#h" x="442"/><use href="#r" x="456"/><use href="#d" x="470"/><use href="#d" x="484"/><use href="#r" x="499"/><use href="#o" x="513"/><use href="#o" x="527"/><use href="#o" x="541"/><use href="#v" x="555"/><use href="#v" x="569"/><use href="#q" x="584"/><use href="#d" x="598"/><use href="#f" x="612"/><use href="#d" x="626"/><use href="#f" x="640"/><use href="#q" x="654"/><use href="#v" x="669"/><use href="#r" x="683"/><use href="#q" x="697"/><use href="#d" x="711"/><use href="#d" x="725"/><use href="#d" x="739"/><use href="#d" x="754"/><use href="#d" x="768"/><use href="#s" x="782"/><use href="#d" x="796"/><use href="#h" x="810"/><use href="#d" x="824"/><use href="#s" x="839"/><use href="#d" x="853"/><use href="#d" x="867"/><use href="#d" x="881"/><use href="#d" x="895"/><use href="#d" x="909"/><use href="#h" x="924"/><use href="#r" x="938"/><use href="#s" x="952"/><use href="#r" x="966"/><use href="#r" x="980"/><use href="#s" x="994"/><use href="#t" x="1009"/><use href="#d" x="1023"/><use href="#d" x="1037"/><use href="#d" x="1051"/><use href="#d" x="1065"/><use href="#d" x="1079"/><use href="#d" x="1094"/><use href="#d" x="1108"/><use href="#d" x="1122"/><use href="#d" x="1136"/><use href="#d" x="1150"/><use href="#s" x="1164"/><use href="#d" x="1179"/><use href="#d" x="1193"/><use href="#d" x="1207"/><use href="#d" x="1221"/>
</g>
<g transform="translate(0,882)">
<use href="#o" x="116"/><use href="#o" x="130"/><use href="#o" x="144"/><use href="#o" x="159"/><use href="#o" x="173"/><use href="#o" x="187"/><use href="#o" x="201"/><use href="#o" x="215"/><use href="#o" x="229"/><use href="#v" x="244"/><use href="#o" x="258"/><use href="#o" x="272"/><use href="#o" x="286"/><use href="#o" x="300"/><use href="#o" x="314"/><use href="#o" x="329"/><use href="#o" x="343"/><use href="#o" x="357"/><use href="#o" x="371"/><use href="#h" x="385"/><use href="#d" x="399"/><use href="#d" x="414"/><use href="#d" x="428"/><use href="#d" x="442"/><use href="#d" x="456"/><use href="#d" x="470"/><use href="#v" x="484"/><use href="#v" x="499"/><use href="#d" x="513"/><use href="#d" x="527"/><use href="#d" x="541"/><use href="#d" x="555"/><use href="#d" x="569"/><use href="#d" x="584"/><use href="#v" x="598"/><use href="#o" x="612"/><use href="#q" x="626"/><use href="#v" x="640"/><use href="#o" x="654"/><use href="#o" x="669"/><use href="#o" x="683"/><use href="#o" x="697"/><use href="#q" x="711"/><use href="#s" x="725"/><use href="#s" x="739"/><use href="#d" x="754"/><use href="#d" x="768"/><use href="#d" x="782"/><use href="#d" x="796"/><use href="#h" x="810"/><use href="#d" x="824"/><use href="#d" x="839"/><use href="#r" x="853"/><use href="#h" x="867"/><use href="#d" x="881"/><use href="#d" x="895"/><use href="#d" x="909"/><use href="#d" x="924"/><use href="#t" x="938"/><use href="#d" x="952"/><use href="#r" x="966"/><use href="#o" x="980"/><use href="#v" x="994"/><use href="#h" x="1009"/><use href="#s" x="1023"/><use href="#d" x="1037"/><use href="#s" x="1051"/><use href="#t" x="1065"/><use href="#s" x="1079"/><use href="#t" x="1094"/><use href="#t" x="1108"/><use href="#t" x="1122"/><use href="#d" x="1136"/><use href="#t" x="1150"/><use href="#q" x="1164"/><use href="#f" x="1179"/><use href="#f" x="1193"/><use href="#t" x="1207"/><use href="#d" x="1221"/>
</g>
</g>

<!-- convective cloud bars -->
<g class="bar" transform="translate(0,750) scale(0.40816,0.33333)">
<rect x="285" y="660" width="16" height="15"/><rect x="303" y="660" width="33" height="15"/><rect x="686" y="672" width="32" height="15"/><rect x="720" y="672" width="32" height="24"/><rect x="754" y="672" width="33" height="24"/><rect x="788" y="672" width="34" height="24"/><rect x="823" y="672" width="33" height="24"/><rect x="857" y="660" width="35" height="36"/><rect x="893" y="672" width="33" height="15"/><rect x="929" y="660" width="34" height="15"/><rect x="963" y="732" width="34" height="18"/><rect x="997" y="759" width="34" height="3"/><rect x="1031" y="690" width="35" height="51"/><rect x="1066" y="732" width="34" height="12"/><rect x="1102" y="723" width="32" height="12"/><rect x="1205" y="753" width="35" height="6"/><rect x="1240" y="741" width="34" height="12"/><rect x="1448" y="690" width="34" height="15"/><rect x="1485" y="681" width="33" height="69"/><rect x="1519" y="681" width="33" height="72"/><rect x="1553" y="681" width="15" height="72"/>
</g>
<g class="bar" transform="translate(640,750) scale(0.40816,0.33333)">
<rect x="0" y="681" width="20" height="72"/><rect x="20" y="750" width="34" height="6"/><rect x="125" y="672" width="33" height="15"/><rect x="159" y="681" width="33" height="15"/><rect x="194" y="681" width="34" height="15"/><rect x="228" y="660" width="34" height="36"/><rect x="262" y="660" width="34" height="45"/><rect x="296" y="660" width="35" height="45"/><rect x="333" y="672" width="32" height="42"/><rect x="367" y="732" width="35" height="12"/><rect x="436" y="747" width="34" height="9"/><rect x="470" y="741" width="35" height="12"/><rect x="507" y="741" width="33" height="15"/><rect x="541" y="741" width="33" height="12"/><rect x="576" y="702" width="34" height="48"/><rect x="610" y="702" width="34" height="48"/><rect x="644" y="708" width="35" height="42"/><rect x="679" y="738" width="34" height="6"/><rect x="713" y="732" width="35" height="18"/><rect x="750" y="723" width="32" height="30"/><rect x="784" y="738" width="34" height="12"/><rect x="818" y="741" width="35" height="12"/><rect x="958" y="681" width="32" height="33"/><rect x="992" y="732" width="34" height="9"/><rect x="1027" y="717" width="34" height="12"/><rect x="1061" y="732" width="34" height="9"/><rect x="1095" y="690" width="34" height="15"/><rect x="1132" y="738" width="33" height="12"/><rect x="1166" y="741" width="32" height="12"/><rect x="1200" y="660" width="35" height="15"/><rect x="1235" y="717" width="34" height="12"/><rect x="1269" y="681" width="35" height="15"/><rect x="1304" y="690" width="34" height="15"/><rect x="1340" y="738" width="32" height="21"/><rect x="1374" y="741" width="34" height="18"/><rect x="1408" y="738" width="16" height="21"/>
</g>
</svg>
</body></html>
